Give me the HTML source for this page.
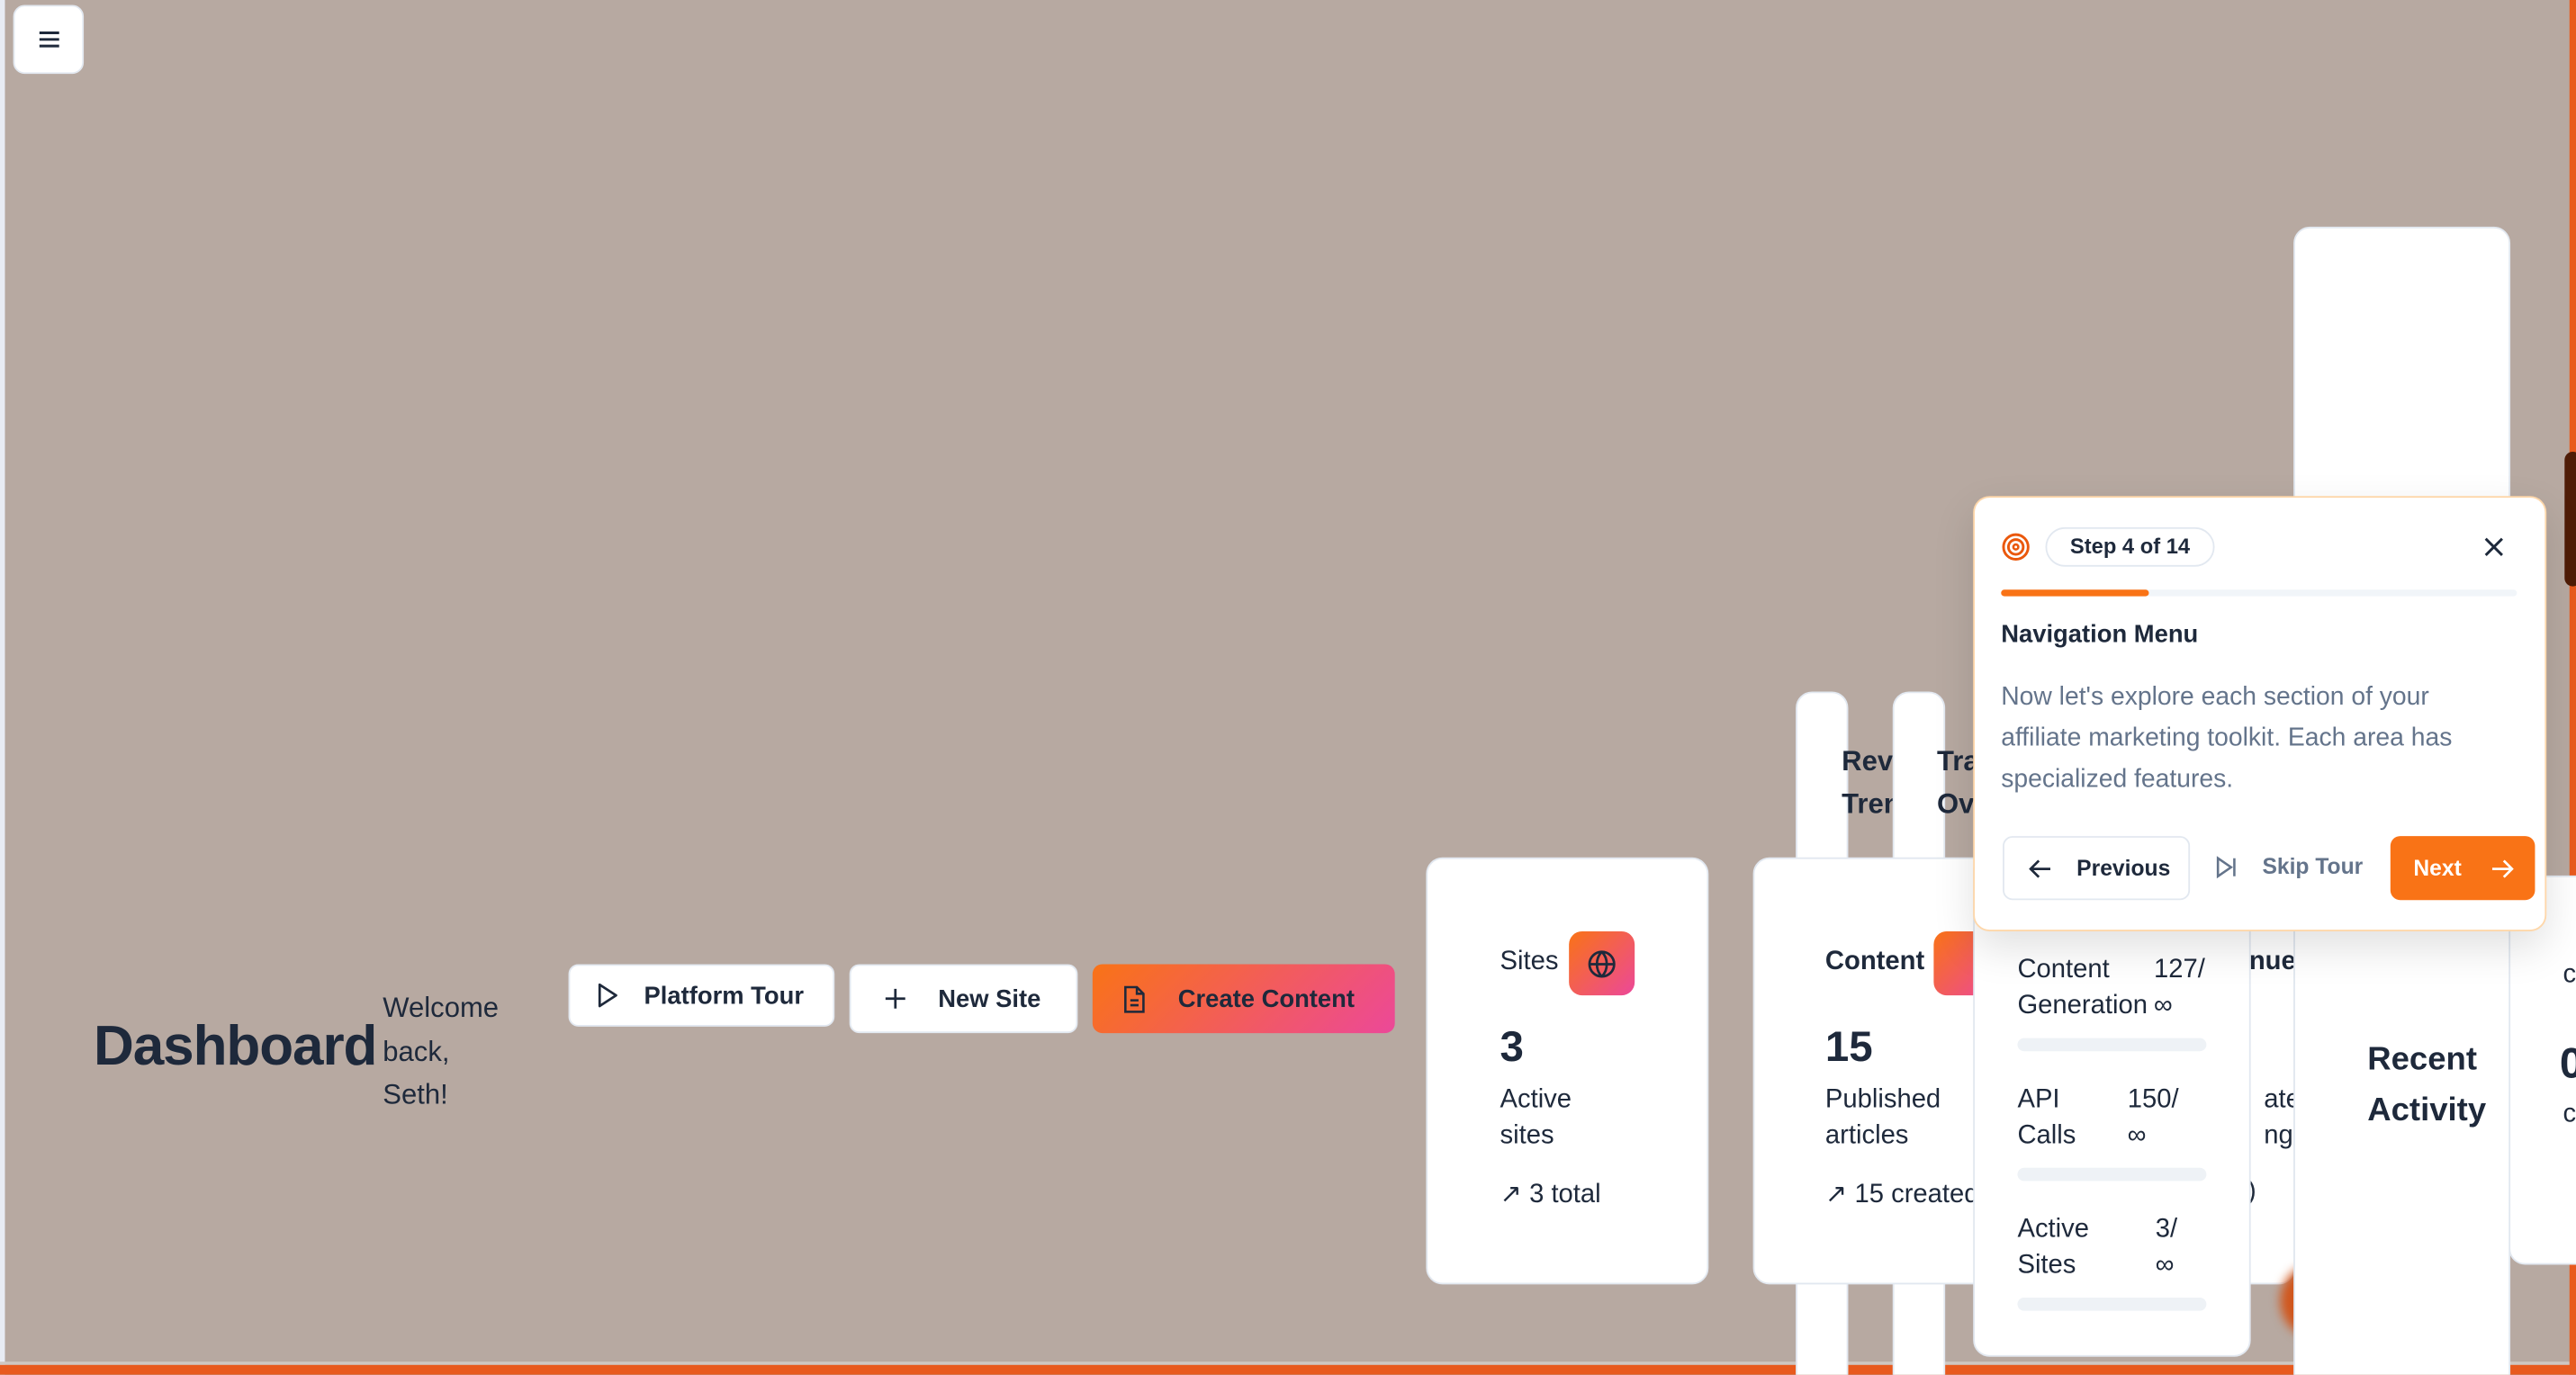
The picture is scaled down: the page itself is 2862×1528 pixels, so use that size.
<!DOCTYPE html>
<html><head><meta charset="utf-8"><style>
html,body{margin:0;padding:0;width:2862px;height:1528px;overflow:hidden;background:#b7a9a1;}
#w{position:absolute;left:0;top:0;width:1568px;height:837px;transform:scale(1.8253);transform-origin:0 0;font-family:"Liberation Sans",sans-serif;color:#1e293b;background:#b7a9a1;overflow:hidden;}
.a{position:absolute;}
.card{position:absolute;background:#fff;border:1px solid #e2e8f0;border-radius:10px;box-sizing:border-box;}
.btn{position:absolute;background:#fff;border:1px solid #e2e8f0;border-radius:6px;box-sizing:border-box;font-size:15px;font-weight:bold;display:flex;align-items:center;}
.t{position:absolute;white-space:nowrap;}
.grad{background:linear-gradient(135deg,#f97316,#ec4899);}
</style></head><body><div id="w">
<div class="a" style="left:0;top:0;width:3px;height:837px;background:#e8ecf4"></div>
<div class="a" style="left:0;top:829px;width:1568px;height:2px;background:#cfc7c2"></div>
<div class="a" style="left:0;top:831px;width:1568px;height:6px;background:#e85a1e"></div>
<div class="a" style="left:1564px;top:0;width:4px;height:837px;background:#e85a1e"></div>
<div class="a" style="left:1561px;top:275px;width:10px;height:82px;background:#4f1c06;border-radius:8px"></div>

<div class="btn" style="left:8px;top:3px;width:43px;height:42px;border-radius:7px;justify-content:center">
<svg width="14" height="12" viewBox="0 0 14 12"><path d="M1 2h12M1 6h12M1 10h12" stroke="#1e293b" stroke-width="1.6"/></svg></div>

<div class="t" style="left:57px;top:618px;font-size:34px;font-weight:bold;letter-spacing:-0.6px">Dashboard</div>
<div class="t" style="left:233px;top:601px;font-size:17px;line-height:26.5px">Welcome<br>back,<br>Seth!</div>

<div class="btn" style="left:346px;top:587px;width:162px;height:38px;padding-left:16px"><svg width="14" height="16" viewBox="0 0 14 16"><path d="M2 1.5l10 6.5-10 6.5z" fill="none" stroke="#1e293b" stroke-width="1.5" stroke-linejoin="round"/></svg><span style="margin-left:15px">Platform Tour</span></div>
<div class="btn" style="left:517px;top:587px;width:139px;height:42px;padding-left:20px"><svg width="14" height="14" viewBox="0 0 14 14"><path d="M7 1v12M1 7h12" stroke="#1e293b" stroke-width="1.5"/></svg><span style="margin-left:19px">New Site</span></div>
<div class="btn grad" style="left:665px;top:587px;width:184px;height:42px;padding-left:18px;border:none;color:#1e293b"><svg width="14" height="17" viewBox="0 0 14 17"><path d="M2 1h7l4 4v11H2z M9 1v4h4 M5 9h5M5 12h5" fill="none" stroke="#1e293b" stroke-width="1.4"/></svg><span style="margin-left:20px">Create Content</span></div>

<div class="card" style="left:1093px;top:421px;width:32px;height:430px"></div>
<div class="t" style="left:1121px;top:451px;font-size:17px;font-weight:bold;line-height:26px">Rev<br>Tren</div>
<div class="card" style="left:1152px;top:421px;width:32px;height:430px"></div>
<div class="t" style="left:1179px;top:451px;font-size:17px;font-weight:bold;line-height:26px">Tra<br>Ov</div>

<div class="card" style="left:868px;top:522px;width:172px;height:260px"></div>
<div class="t" style="left:913px;top:577px;font-size:16px">Sites</div>
<div class="a grad" style="left:955px;top:567px;width:40px;height:39px;border-radius:8px;display:flex;align-items:center;justify-content:center"><svg width="18" height="18" viewBox="0 0 18 18"><circle cx="9" cy="9" r="7.5" fill="none" stroke="#1e293b" stroke-width="1.5"/><path d="M1.5 9h15M9 1.5c-4 4-4 11 0 15M9 1.5c4 4 4 11 0 15" fill="none" stroke="#1e293b" stroke-width="1.5"/></svg></div>
<div class="t" style="left:913px;top:622px;font-size:26px;font-weight:bold">3</div>
<div class="t" style="left:913px;top:659px;font-size:16px;line-height:22px">Active<br>sites</div>
<div class="t" style="left:913px;top:717px;font-size:16px">↗ 3 total</div>

<div class="card" style="left:1260px;top:530px;width:137px;height:252px"></div>
<div class="t" style="left:1369px;top:577px;font-size:16px;font-weight:bold">nue</div>
<div class="t" style="left:1378px;top:659px;font-size:16px;line-height:22px">ate<br>ngs</div>
<div class="t" style="left:1368px;top:717px;font-size:16px">)</div>

<div class="card" style="left:1067px;top:522px;width:200px;height:260px"></div>
<div class="t" style="left:1111px;top:577px;font-size:16px;font-weight:bold">Content</div>
<div class="a grad" style="left:1177px;top:567px;width:40px;height:39px;border-radius:8px"></div>
<div class="t" style="left:1111px;top:622px;font-size:26px;font-weight:bold">15</div>
<div class="t" style="left:1111px;top:659px;font-size:16px;line-height:22px">Published<br>articles</div>
<div class="t" style="left:1111px;top:717px;font-size:16px">↗ 15 created</div>

<div class="a" style="left:1388px;top:770px;width:40px;height:44px;border-radius:50%;background:#d0561c;filter:blur(3px)"></div>

<div class="card" style="left:1527px;top:533px;width:60px;height:237px"></div>
<div class="t" style="left:1560px;top:585px;font-size:16px">c</div>
<div class="t" style="left:1558px;top:632px;font-size:26px;font-weight:bold">0</div>
<div class="t" style="left:1560px;top:670px;font-size:16px">c</div>

<div class="card" style="left:1396px;top:138px;width:132px;height:710px"></div>
<div class="t" style="left:1441px;top:630px;font-size:20px;font-weight:bold;line-height:31px">Recent<br>Activity</div>

<div class="card" style="left:1201px;top:520px;width:169px;height:306px"></div>
<div class="t" style="left:1228px;top:580px;font-size:16px;line-height:22px">Content<br>Generation</div>
<div class="t" style="left:1311px;top:580px;font-size:16px;line-height:22px">127/<br>∞</div>
<div class="a" style="left:1228px;top:632px;width:115px;height:8px;border-radius:4px;background:#eef2f6"></div>
<div class="t" style="left:1228px;top:659px;font-size:16px;line-height:22px">API<br>Calls</div>
<div class="t" style="left:1295px;top:659px;font-size:16px;line-height:22px">150/<br>∞</div>
<div class="a" style="left:1228px;top:711px;width:115px;height:8px;border-radius:4px;background:#eef2f6"></div>
<div class="t" style="left:1228px;top:738px;font-size:16px;line-height:22px">Active<br>Sites</div>
<div class="t" style="left:1312px;top:738px;font-size:16px;line-height:22px">3/<br>∞</div>
<div class="a" style="left:1228px;top:790px;width:115px;height:8px;border-radius:4px;background:#eef2f6"></div>

<div class="a" style="left:1201px;top:302px;width:349px;height:265px;background:#fff;border:1px solid #fed7aa;border-radius:10px;box-sizing:border-box;box-shadow:0 10px 25px rgba(0,0,0,.12)"></div>
<svg class="a" style="left:1218px;top:324px" width="18" height="18" viewBox="0 0 18 18"><circle cx="9" cy="9" r="7.5" fill="none" stroke="#ea580c" stroke-width="1.6"/><circle cx="9" cy="9" r="4.5" fill="none" stroke="#ea580c" stroke-width="1.6"/><circle cx="9" cy="9" r="1.5" fill="none" stroke="#ea580c" stroke-width="1.4"/></svg>
<div class="a" style="left:1245px;top:321px;width:103px;height:24px;border:1px solid #e2e8f0;border-radius:12px;box-sizing:border-box;font-size:13px;font-weight:bold;text-align:center;line-height:22px">Step 4 of 14</div>
<svg class="a" style="left:1512px;top:327px" width="12" height="12" viewBox="0 0 12 12"><path d="M1 1l10 10M11 1L1 11" stroke="#1e293b" stroke-width="1.6"/></svg>
<div class="a" style="left:1218px;top:359px;width:314px;height:4px;border-radius:2px;background:#f1f5f9"></div>
<div class="a" style="left:1218px;top:359px;width:90px;height:4px;border-radius:2px;background:#f97316"></div>
<div class="t" style="left:1218px;top:378px;font-size:15px;font-weight:bold">Navigation Menu</div>
<div class="t" style="left:1218px;top:412px;font-size:15.5px;line-height:25px;color:#64748b">Now let's explore each section of your<br>affiliate marketing toolkit. Each area has<br>specialized features.</div>
<div class="btn" style="left:1219px;top:509px;width:114px;height:39px;padding-left:15px;font-size:13.5px"><svg width="14" height="12" viewBox="0 0 14 12"><path d="M13 6H1M6 1L1 6l5 5" fill="none" stroke="#1e293b" stroke-width="1.5"/></svg><span style="margin-left:15px">Previous</span></div>
<svg class="a" style="left:1348px;top:521px" width="14" height="14" viewBox="0 0 14 14"><path d="M2 1.5l8 5.5-8 5.5zM12 1.5v11" fill="none" stroke="#64748b" stroke-width="1.4"/></svg>
<div class="t" style="left:1377px;top:520px;font-size:13.5px;font-weight:bold;color:#64748b">Skip Tour</div>
<div class="btn" style="left:1455px;top:509px;width:88px;height:39px;border:none;background:#f97316;color:#fff;padding-left:14px;font-size:13.5px"><span>Next</span><svg style="margin-left:18px" width="14" height="12" viewBox="0 0 14 12"><path d="M1 6h12M8 1l5 5-5 5" fill="none" stroke="#fff" stroke-width="1.5"/></svg></div>
</div></body></html>
